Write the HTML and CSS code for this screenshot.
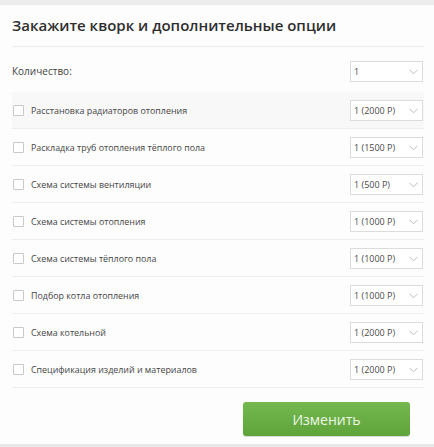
FILE: index.html
```html
<!DOCTYPE html>
<html lang="ru">
<head>
<meta charset="utf-8">
<link rel="stylesheet" href="styles.css">
</head>
<body>
<div class="topband"></div>
<div class="panel">
  <h1 class="title">Закажите кворк и дополнительные опции</h1>
  <div class="qty-row">
    <span class="qty-label">Количество:</span>
    <div class="select"><span>1</span><svg class="chev" width="9" height="6" viewBox="0 0 9 6"><path d="M0.5 0.8 L4.5 4.8 L8.5 0.8" fill="none" stroke="#b8bcc4" stroke-width="1"/></svg></div>
  </div>
  <ul class="options">
    <li class="opt first"><span class="box"></span><span class="name">Расстановка радиаторов отопления</span><div class="select"><span>1 (2000 Р)</span><svg class="chev" width="9" height="6" viewBox="0 0 9 6"><path d="M0.5 0.8 L4.5 4.8 L8.5 0.8" fill="none" stroke="#b8bcc4" stroke-width="1"/></svg></div></li>
    <li class="opt"><span class="box"></span><span class="name">Раскладка труб отопления тёплого пола</span><div class="select"><span>1 (1500 Р)</span><svg class="chev" width="9" height="6" viewBox="0 0 9 6"><path d="M0.5 0.8 L4.5 4.8 L8.5 0.8" fill="none" stroke="#b8bcc4" stroke-width="1"/></svg></div></li>
    <li class="opt"><span class="box"></span><span class="name">Схема системы вентиляции</span><div class="select"><span>1 (500 Р)</span><svg class="chev" width="9" height="6" viewBox="0 0 9 6"><path d="M0.5 0.8 L4.5 4.8 L8.5 0.8" fill="none" stroke="#b8bcc4" stroke-width="1"/></svg></div></li>
    <li class="opt"><span class="box"></span><span class="name">Схема системы отопления</span><div class="select"><span>1 (1000 Р)</span><svg class="chev" width="9" height="6" viewBox="0 0 9 6"><path d="M0.5 0.8 L4.5 4.8 L8.5 0.8" fill="none" stroke="#b8bcc4" stroke-width="1"/></svg></div></li>
    <li class="opt"><span class="box"></span><span class="name">Схема системы тёплого пола</span><div class="select"><span>1 (1000 Р)</span><svg class="chev" width="9" height="6" viewBox="0 0 9 6"><path d="M0.5 0.8 L4.5 4.8 L8.5 0.8" fill="none" stroke="#b8bcc4" stroke-width="1"/></svg></div></li>
    <li class="opt"><span class="box"></span><span class="name">Подбор котла отопления</span><div class="select"><span>1 (1000 Р)</span><svg class="chev" width="9" height="6" viewBox="0 0 9 6"><path d="M0.5 0.8 L4.5 4.8 L8.5 0.8" fill="none" stroke="#b8bcc4" stroke-width="1"/></svg></div></li>
    <li class="opt"><span class="box"></span><span class="name">Схема котельной</span><div class="select"><span>1 (2000 Р)</span><svg class="chev" width="9" height="6" viewBox="0 0 9 6"><path d="M0.5 0.8 L4.5 4.8 L8.5 0.8" fill="none" stroke="#b8bcc4" stroke-width="1"/></svg></div></li>
    <li class="opt"><span class="box"></span><span class="name">Спецификация изделий и материалов</span><div class="select"><span>1 (2000 Р)</span><svg class="chev" width="9" height="6" viewBox="0 0 9 6"><path d="M0.5 0.8 L4.5 4.8 L8.5 0.8" fill="none" stroke="#b8bcc4" stroke-width="1"/></svg></div></li>
  </ul>
  <div class="actions">
    <button class="btn">Изменить</button>
  </div>
</div>
<div class="bottomline"></div>
</body>
</html>
```
FILE: styles.css
```css
* { box-sizing: border-box; }
html, body { margin: 0; padding: 0; }
body {
  background: #fdfdfd;
  font-family: "Open Sans", "Noto Sans", sans-serif;
  color: #333;
  width: 434px;
  height: 447px;
  overflow: hidden;
  display: flex;
  flex-direction: column;
}
.topband { height: 5px; background: #ececec; flex: none; }
.panel { padding: 0 10px 0 12px; flex: 1; }
.title {
  margin: 0;
  padding-top: 10px;
  font-size: 15px;
  line-height: 20px;
  font-weight: 600;
  color: #2e2e2e;
  height: 42px;
  border-bottom: 1px solid #ececec;
}
.qty-row {
  display: flex;
  align-items: center;
  justify-content: space-between;
  height: 45px;
  padding: 3px 1px 0 0;
}
.qty-label { font-size: 10px; color: #444; }
.options { list-style: none; margin: 0; padding: 0; }
.opt {
  display: flex;
  align-items: center;
  height: 37px;
  padding: 1px 1px 0 1px;
  border-bottom: 1px solid #ededed;
}
.opt.first { background: #f8f8f8; }
.box {
  width: 11px;
  height: 11px;
  border: 1px solid #c9c9c9;
  border-radius: 1px;
  background: #fff;
  flex: none;
}
.name {
  margin-left: 7px;
  font-size: 8.9px;
  color: #454545;
  flex: 1;
}
.select {
  width: 73px;
  height: 21px;
  border: 1px solid #dcdcdc;
  background: #fff;
  display: flex;
  align-items: center;
  justify-content: space-between;
  padding: 0 4px 0 3px;
  font-size: 9px;
  color: #4a4a4a;
  flex: none;
}
.chev { display: block; margin-top: 1px; }
.actions {
  display: flex;
  justify-content: flex-end;
  padding: 14px 14px 0 0;
}
.btn {
  width: 167px;
  height: 34px;
  border: none;
  border-radius: 3px;
  background: linear-gradient(#74b94f, #5fa33b);
  box-shadow: 0 1px 1px rgba(0,0,0,0.15);
  color: #eef7e6;
  font-family: "Open Sans", "Noto Sans", sans-serif;
  font-size: 14px;
  font-weight: 400;
  padding: 0;
}
.bottomline {
  height: 3px;
  background: #e8e8e8;
  flex: none;
}
```
